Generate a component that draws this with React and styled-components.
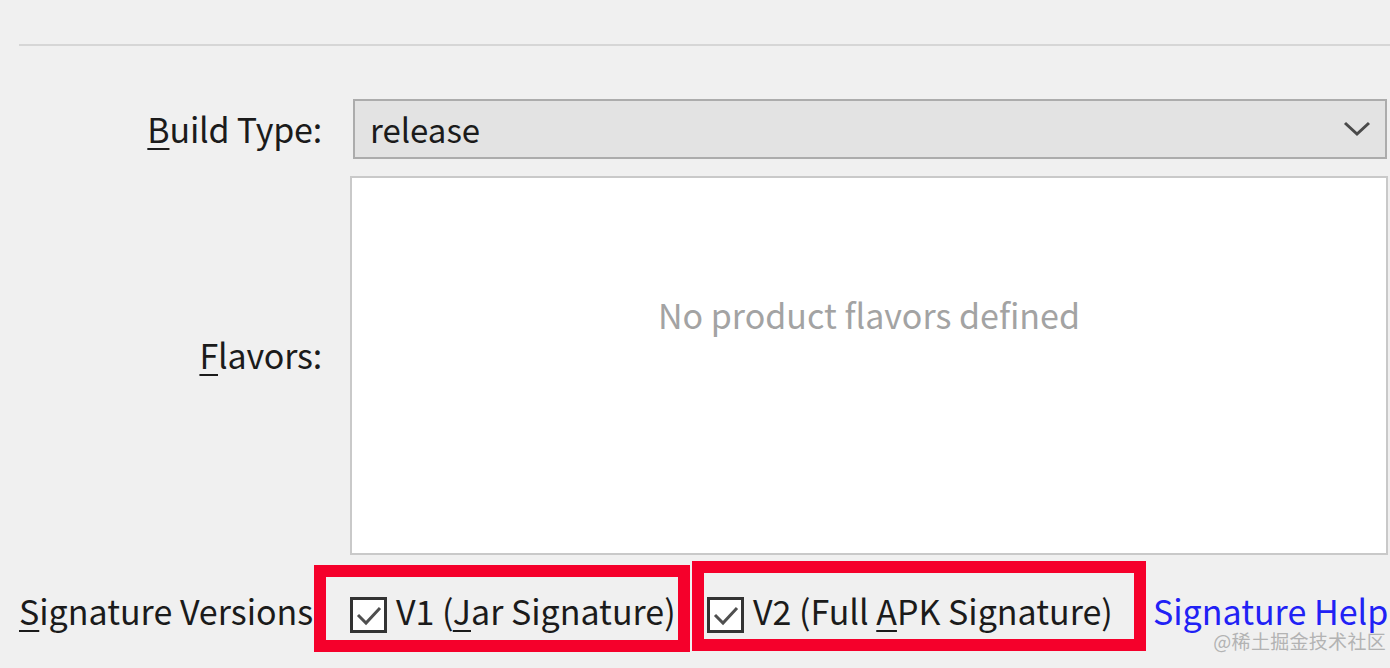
import React from 'react';
import styled, { createGlobalStyle } from 'styled-components';

const GlobalStyle = createGlobalStyle`
  html, body {
    margin: 0;
    padding: 0;
    background: #f0f0f0;
  }
  body {
    font-family: "Noto Sans CJK SC", "Noto Sans", sans-serif;
    color: #1b1b1b;
  }
`;

const Page = styled.div`
  position: relative;
  width: 1390px;
  height: 668px;
  overflow: hidden;
  padding-left: 19px;
  box-sizing: border-box;
  background: #f0f0f0;
`;

const TopRule = styled.div`
  margin-top: 44px;
  height: 2px;
  background: #d6d6d6;
`;

const FormGrid = styled.div`
  display: grid;
  grid-template-columns: 331px 1038px;
  grid-template-rows: 60px 379px;
  row-gap: 17px;
  margin-top: 53px;
`;

const Label = styled.label`
  display: flex;
  align-items: center;
  justify-content: flex-end;
  padding-right: 28px;
  padding-bottom: ${p => p.$lift || 0}px;
  font-size: 34px;
  line-height: 40px;
  letter-spacing: -0.2px;
`;

const Key = styled.u`
  text-decoration-thickness: 2px;
  text-underline-offset: 5px;
`;

const Select = styled.div`
  margin-left: 3px;
  margin-right: 1px;
  display: flex;
  align-items: center;
  justify-content: space-between;
  padding: 0 14px 0 15px;
  background: #e3e3e3;
  border: 2px solid #acacac;
  box-sizing: border-box;
  font-size: 33px;
  line-height: 40px;
`;

const FlavorBox = styled.div`
  display: flex;
  justify-content: center;
  padding-top: 117px;
  background: #ffffff;
  border: 2px solid #c9c9c9;
  box-sizing: border-box;
  font-size: 34px;
  line-height: 40px;
  color: #a3a3a3;
`;

const SignatureRow = styled.div`
  display: flex;
  align-items: flex-start;
`;

const RowLabel = styled.span`
  font-size: 34px;
  line-height: 40px;
  width: 295px;
  margin-top: 36px;
  white-space: nowrap;
`;

const Highlight = styled.div`
  display: flex;
  align-items: flex-start;
  width: ${p => p.$w}px;
  height: ${p => p.$h}px;
  margin-top: ${p => p.$top}px;
  margin-left: ${p => p.$left || 0}px;
  border: 12px solid #f5002b;
  box-sizing: border-box;
  padding-left: ${p => p.$pad}px;
  padding-top: ${p => p.$pt}px;
`;

const Check = styled.span`
  display: inline-flex;
  flex: none;
  align-items: center;
  justify-content: center;
  width: 37px;
  height: 36px;
  box-sizing: border-box;
  border: 3px solid #333333;
  background: #ffffff;
  margin-right: 9px;
`;

const CheckText = styled.span`
  font-size: 34px;
  line-height: 40px;
  margin-top: -6px;
  white-space: nowrap;
`;

const HelpLink = styled.a`
  margin-left: 7px;
  margin-top: 36px;
  font-size: 34px;
  line-height: 40px;
  color: #2121f5;
  text-decoration: none;
  white-space: nowrap;
`;

const Watermark = styled.div`
  position: absolute;
  right: 4px;
  bottom: 16px;
  font-size: 19px;
  line-height: 22px;
  color: #b3b3b3;
  letter-spacing: 0.3px;
`;

const Chevron = () => (
  <svg width="28" height="18" viewBox="0 0 28 18">
    <path d="M2 3 L14 14 L26 3" fill="none" stroke="#4a4a4a" strokeWidth="3" />
  </svg>
);

const Tick = () => (
  <svg width="28" height="24" viewBox="0 0 28 24">
    <path d="M3 12 L11 20 L25 5" fill="none" stroke="#4f4f4f" strokeWidth="3" />
  </svg>
);

export default function App() {
  return (
    <>
      <GlobalStyle />
      <Page>
        <TopRule />
        <FormGrid>
          <Label><span><Key>B</Key>uild Type:</span></Label>
          <Select>
            <span>release</span>
            <Chevron />
          </Select>
          <Label $lift={22}><span><Key>F</Key>lavors:</span></Label>
          <FlavorBox>No product flavors defined</FlavorBox>
        </FormGrid>
        <SignatureRow>
          <RowLabel><Key>S</Key>ignature Versions</RowLabel>
          <Highlight $w={376} $h={87} $top={10} $pad={24} $pt={20}>
            <Check><Tick /></Check>
            <CheckText>V1 (<Key>J</Key>ar Signature)</CheckText>
          </Highlight>
          <Highlight $w={454} $h={90} $top={6} $left={2} $pad={3} $pt={24}>
            <Check><Tick /></Check>
            <CheckText>V2 (Full <Key>A</Key>PK Signature)</CheckText>
          </Highlight>
          <HelpLink href="#">Signature Help</HelpLink>
        </SignatureRow>
        <Watermark>@稀土掘金技术社区</Watermark>
      </Page>
    </>
  );
}
